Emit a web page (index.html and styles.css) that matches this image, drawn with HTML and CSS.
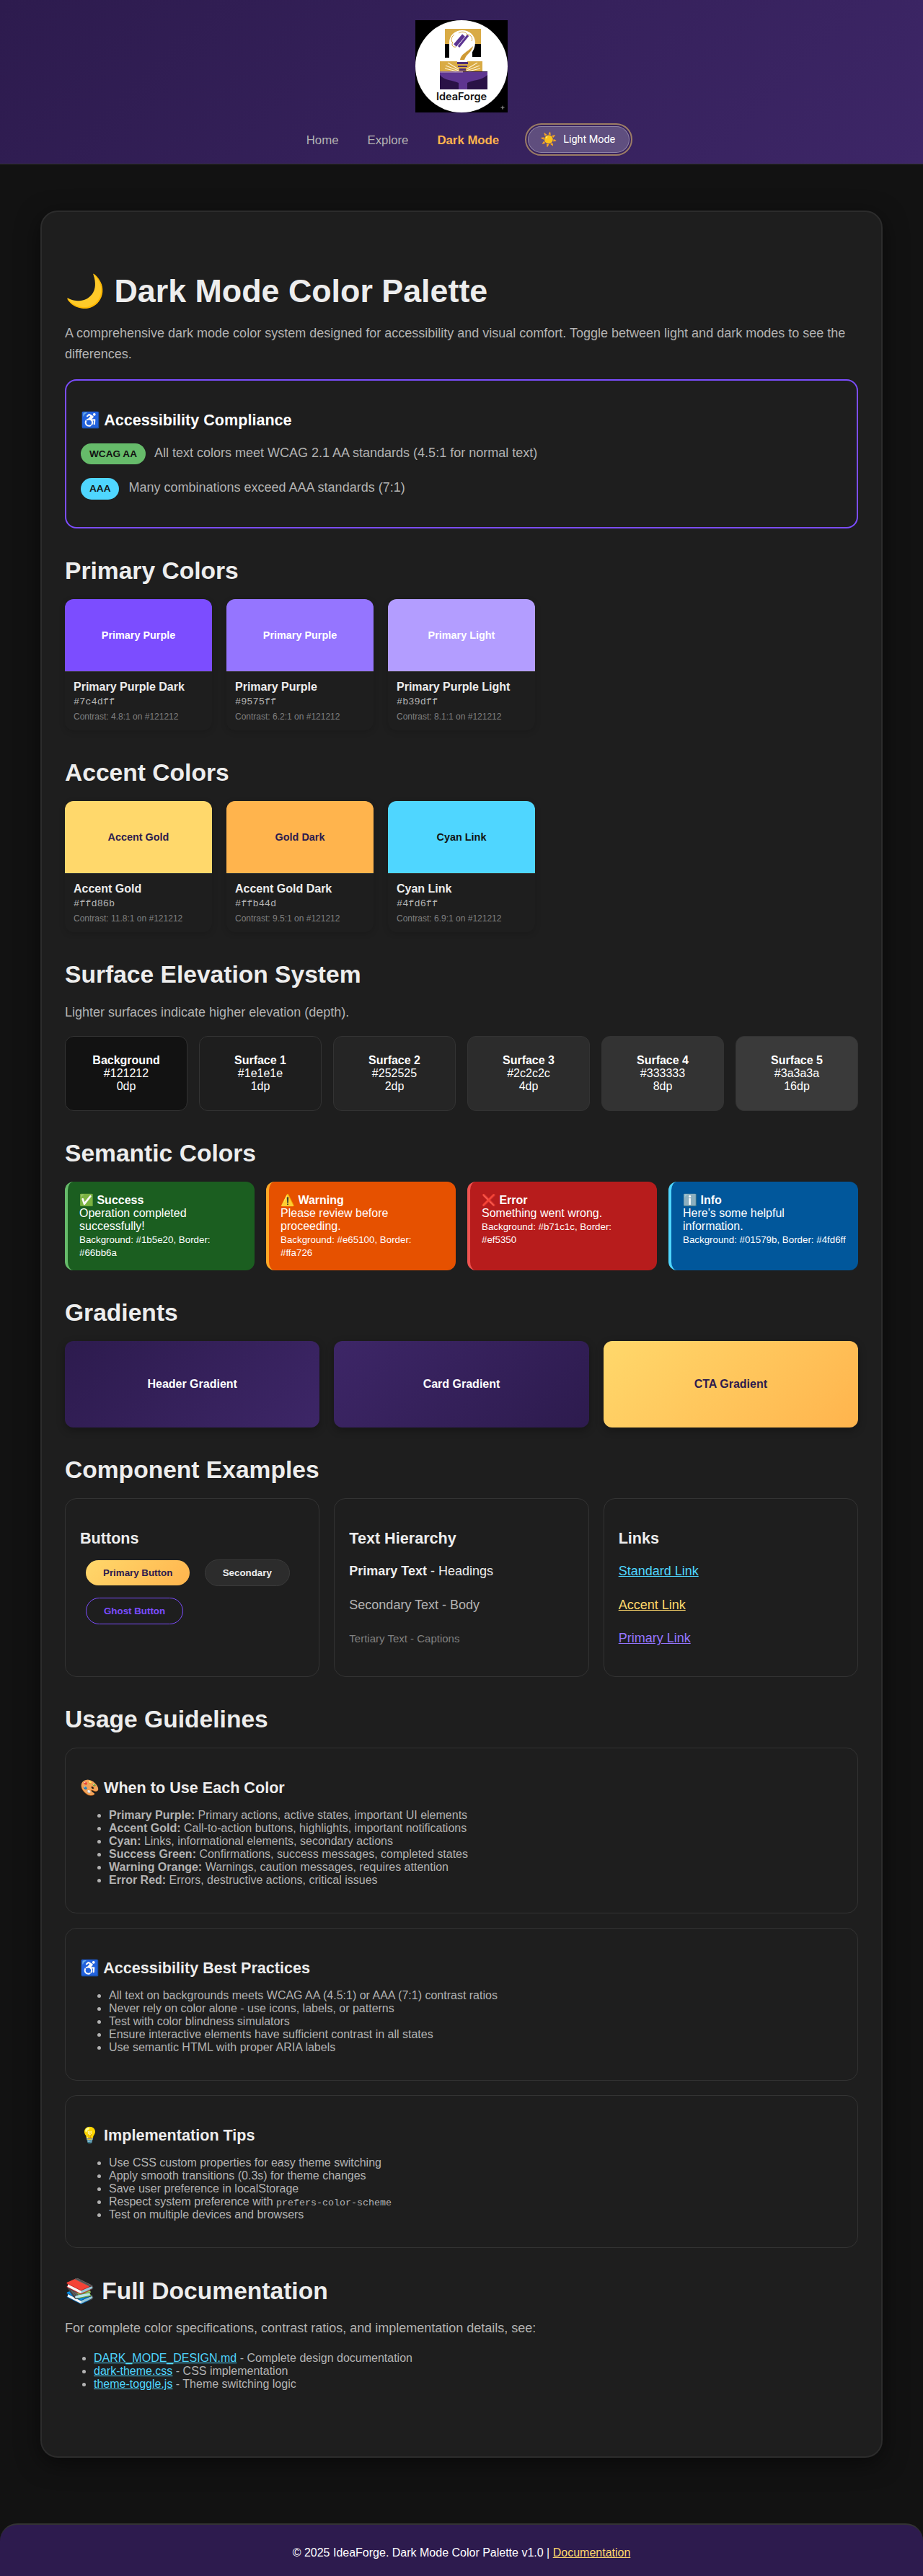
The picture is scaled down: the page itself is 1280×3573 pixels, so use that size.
FILE: index.html
```
<!DOCTYPE html>
<html lang="en">
<head>
<meta charset="utf-8">
<title>Dark Mode Color Palette - IdeaForge</title>
<link rel="stylesheet" href="styles.css">
</head>
<body>
<header class="site-header">
  <svg class="logo" viewBox="0 0 128 128" width="128" height="128" role="img" aria-label="IdeaForge logo">
    <rect width="128" height="128" fill="#000"/>
    <circle cx="64" cy="64" r="64" fill="#fff"/>
    <rect x="41" y="12" width="50" height="21" fill="#d9ab45"/>
    <rect x="41" y="33" width="6" height="19" fill="#000"/>
    <rect x="79" y="33" width="12" height="18" fill="#000"/>
    <path d="M59 58 C58 50 47 45 47 31 C47 21 55 14 65 14 C75 14 83 21 83 31 C83 44 73 49 72 58 Z" fill="#fff"/>
    <path d="M54 20 C49 24 49 29 52 31 C49 35 53 38 56 37 M60 18 C64 15 70 16 72 20 C78 20 80 26 78 29" fill="none" stroke="#d4a23c" stroke-width="1"/>
    <path d="M55 35 L67 21" stroke="#5b3390" stroke-width="5"/>
    <path d="M60 37 L73 21" stroke="#5b3390" stroke-width="3"/>
    <path d="M62 55 C63 47 71 45 80 36 C79 44 71 46 68 55 Z" fill="#cf9a35"/>
    <rect x="34" y="57" width="24" height="15" fill="#d9ab45"/>
    <rect x="72" y="57" width="21" height="15" fill="#d9ab45"/>
    <rect x="34" y="60" width="59" height="12" fill="#d9ab45"/>
    <path d="M58 58 H73 V61 H58 Z M59 63 H72 V65 H59 Z M61 67 H70 V70 H61 Z" fill="#4c2c78"/>
    <path d="M45 59 L60 68 M42 63 L60 70 M41 67 L62 72 M86 59 L71 68 M89 63 L71 70 M90 67 L69 72" stroke="#fff4d6" stroke-width="1.1"/>
    <rect x="34" y="71" width="66" height="25" fill="#2a1246"/>
    <path d="M34 72 H100 V76 C92 84 78 83 72 87 L72 96 H60 V87 C52 83 40 84 34 76 Z" fill="#5e3590"/>
    <rect x="34" y="71" width="32" height="2" fill="#8d6aa8"/>
    <text class="logo-word" x="64" y="111" text-anchor="middle">IdeaForge</text>
    <path d="M121 118 L122 120.500 L124.500 121 L122 122 L121 124.500 L120 122 L117.500 121 L120 120.500 Z" fill="#777"/>
  </svg>
  <nav class="nav">
    <a class="nav-link" href="#">Home</a>
    <a class="nav-link" href="#">Explore</a>
    <a class="nav-link nav-active" href="#">Dark Mode</a>
    <button class="theme-toggle" type="button"><span class="toggle-icon">☀️</span><span>Light Mode</span></button>
  </nav>
</header>

<main class="page-card">
  <section class="intro">
    <h1>🌙 Dark Mode Color Palette</h1>
    <p>A comprehensive dark mode color system designed for accessibility and visual comfort. Toggle between light and dark modes to see the differences.</p>
    <div class="compliance">
      <h3>♿ Accessibility Compliance</h3>
      <p><span class="badge badge-aa">WCAG AA</span> All text colors meet WCAG 2.1 AA standards (4.5:1 for normal text)</p>
      <p><span class="badge badge-aaa">AAA</span> Many combinations exceed AAA standards (7:1)</p>
    </div>
  </section>

  <section>
    <h2>Primary Colors</h2>
    <div class="swatch-grid">
      <article class="swatch">
        <div class="chip chip-purple-dark">Primary Purple</div>
        <div class="swatch-info"><div class="swatch-name">Primary Purple Dark</div><div class="swatch-hex">#7c4dff</div><div class="swatch-contrast">Contrast: 4.8:1 on #121212</div></div>
      </article>
      <article class="swatch">
        <div class="chip chip-purple">Primary Purple</div>
        <div class="swatch-info"><div class="swatch-name">Primary Purple</div><div class="swatch-hex">#9575ff</div><div class="swatch-contrast">Contrast: 6.2:1 on #121212</div></div>
      </article>
      <article class="swatch">
        <div class="chip chip-purple-light">Primary Light</div>
        <div class="swatch-info"><div class="swatch-name">Primary Purple Light</div><div class="swatch-hex">#b39dff</div><div class="swatch-contrast">Contrast: 8.1:1 on #121212</div></div>
      </article>
    </div>
  </section>

  <section>
    <h2>Accent Colors</h2>
    <div class="swatch-grid">
      <article class="swatch">
        <div class="chip chip-gold">Accent Gold</div>
        <div class="swatch-info"><div class="swatch-name">Accent Gold</div><div class="swatch-hex">#ffd86b</div><div class="swatch-contrast">Contrast: 11.8:1 on #121212</div></div>
      </article>
      <article class="swatch">
        <div class="chip chip-gold-dark">Gold Dark</div>
        <div class="swatch-info"><div class="swatch-name">Accent Gold Dark</div><div class="swatch-hex">#ffb44d</div><div class="swatch-contrast">Contrast: 9.5:1 on #121212</div></div>
      </article>
      <article class="swatch">
        <div class="chip chip-cyan">Cyan Link</div>
        <div class="swatch-info"><div class="swatch-name">Cyan Link</div><div class="swatch-hex">#4fd6ff</div><div class="swatch-contrast">Contrast: 6.9:1 on #121212</div></div>
      </article>
    </div>
  </section>

  <section>
    <h2>Surface Elevation System</h2>
    <p class="surface-note">Lighter surfaces indicate higher elevation (depth).</p>
    <div class="surface-grid">
      <div class="surface surface-0"><strong>Background</strong><br>#121212<br>0dp</div>
      <div class="surface surface-1"><strong>Surface 1</strong><br>#1e1e1e<br>1dp</div>
      <div class="surface surface-2"><strong>Surface 2</strong><br>#252525<br>2dp</div>
      <div class="surface surface-3"><strong>Surface 3</strong><br>#2c2c2c<br>4dp</div>
      <div class="surface surface-4"><strong>Surface 4</strong><br>#333333<br>8dp</div>
      <div class="surface surface-5"><strong>Surface 5</strong><br>#3a3a3a<br>16dp</div>
    </div>
  </section>

  <section>
    <h2>Semantic Colors</h2>
    <div class="semantic-grid">
      <div class="semantic semantic-success"><strong>✅ Success</strong><br>Operation completed successfully!<br><small>Background: #1b5e20, Border: #66bb6a</small></div>
      <div class="semantic semantic-warning"><strong>⚠️ Warning</strong><br>Please review before proceeding.<br><small>Background: #e65100, Border: #ffa726</small></div>
      <div class="semantic semantic-error"><strong>❌ Error</strong><br>Something went wrong.<br><small>Background: #b71c1c, Border: #ef5350</small></div>
      <div class="semantic semantic-info"><strong>ℹ️ Info</strong><br>Here's some helpful information.<br><small>Background: #01579b, Border: #4fd6ff</small></div>
    </div>
  </section>

  <section>
    <h2>Gradients</h2>
    <div class="three-grid">
      <div class="gradient gradient-header">Header Gradient</div>
      <div class="gradient gradient-card">Card Gradient</div>
      <div class="gradient gradient-cta">CTA Gradient</div>
    </div>
  </section>

  <section>
    <h2>Component Examples</h2>
    <div class="three-grid">
      <div class="panel">
        <h3>Buttons</h3>
        <button class="btn btn-primary" type="button">Primary Button</button>
        <button class="btn btn-secondary" type="button">Secondary</button>
        <button class="btn btn-ghost" type="button">Ghost Button</button>
      </div>
      <div class="panel">
        <h3>Text Hierarchy</h3>
        <p class="text-primary"><strong>Primary Text</strong> - Headings</p>
        <p>Secondary Text - Body</p>
        <p class="text-tertiary"><small>Tertiary Text - Captions</small></p>
      </div>
      <div class="panel">
        <h3>Links</h3>
        <p><a class="link-cyan" href="#">Standard Link</a></p>
        <p><a class="link-gold" href="#">Accent Link</a></p>
        <p><a class="link-purple" href="#">Primary Link</a></p>
      </div>
    </div>
  </section>

  <section>
    <h2>Usage Guidelines</h2>
    <div class="guide-stack">
      <div class="panel">
        <h3>🎨 When to Use Each Color</h3>
        <ul>
          <li><strong>Primary Purple:</strong> Primary actions, active states, important UI elements</li>
          <li><strong>Accent Gold:</strong> Call-to-action buttons, highlights, important notifications</li>
          <li><strong>Cyan:</strong> Links, informational elements, secondary actions</li>
          <li><strong>Success Green:</strong> Confirmations, success messages, completed states</li>
          <li><strong>Warning Orange:</strong> Warnings, caution messages, requires attention</li>
          <li><strong>Error Red:</strong> Errors, destructive actions, critical issues</li>
        </ul>
      </div>
      <div class="panel">
        <h3>♿ Accessibility Best Practices</h3>
        <ul>
          <li>All text on backgrounds meets WCAG AA (4.5:1) or AAA (7:1) contrast ratios</li>
          <li>Never rely on color alone - use icons, labels, or patterns</li>
          <li>Test with color blindness simulators</li>
          <li>Ensure interactive elements have sufficient contrast in all states</li>
          <li>Use semantic HTML with proper ARIA labels</li>
        </ul>
      </div>
      <div class="panel">
        <h3>💡 Implementation Tips</h3>
        <ul>
          <li>Use CSS custom properties for easy theme switching</li>
          <li>Apply smooth transitions (0.3s) for theme changes</li>
          <li>Save user preference in localStorage</li>
          <li>Respect system preference with <code>prefers-color-scheme</code></li>
          <li>Test on multiple devices and browsers</li>
        </ul>
      </div>
    </div>
  </section>

  <section class="docs">
    <h2>📚 Full Documentation</h2>
    <p>For complete color specifications, contrast ratios, and implementation details, see:</p>
    <ul>
      <li><a class="link-cyan" href="#">DARK_MODE_DESIGN.md</a> - Complete design documentation</li>
      <li><a class="link-cyan" href="#">dark-theme.css</a> - CSS implementation</li>
      <li><a class="link-cyan" href="#">theme-toggle.js</a> - Theme switching logic</li>
    </ul>
  </section>
</main>

<footer class="site-footer">© 2025 IdeaForge. Dark Mode Color Palette v1.0 | <a href="#">Documentation</a></footer>
</body>
</html>
```

FILE: styles.css
```
* { box-sizing: border-box; }

body {
  margin: 0;
  background: #121212;
  color: #b3b3b3;
  font-family: "Liberation Sans", Arial, sans-serif;
  font-size: 16px;
}

.site-header {
  display: flex;
  flex-direction: column;
  align-items: center;
  height: 228px;
  padding-top: 28px;
  background: linear-gradient(135deg, #2d1b4e, #3d2667);
  border-bottom: 1px solid #333;
}

.logo { display: block; margin-bottom: 19px; }

.logo-word {
  font-family: Inter, "Liberation Sans", sans-serif;
  font-size: 14.500px;
  font-weight: 600;
  fill: #111;
}

.nav {
  display: flex;
  align-items: center;
  gap: 40px;
  padding-left: 18px;
}

.nav-link { padding-top: 2px; color: #b3b3b3; text-decoration: none; font-size: 16.800px; }
.nav-active { color: #ffb44d; font-weight: 700; }

.theme-toggle {
  display: flex;
  align-items: center;
  gap: 8px;
  height: 37px;
  padding: 0 19px 0 16px;
  border: 1px solid rgba(255, 255, 255, 0.3);
  border-radius: 19px;
  outline: 2px solid rgba(255, 216, 107, 0.5);
  outline-offset: 2px;
  background: rgba(255, 255, 255, 0.2);
  color: #fff;
  font-family: Roboto, sans-serif;
  font-size: 14.400px;
}

.toggle-icon { font-size: 19px; }

.page-card {
  margin: 64px 56px 91px;
  padding: 32px 32px 51px;
  background: #1e1e1e;
  border: 2px solid #2c2c2c;
  border-radius: 24px;
  box-shadow: 0 8px 32px rgba(0, 0, 0, 0.5);
}

section { margin-bottom: 40px; }

h1, h2, h3 { color: #ededed; font-weight: 700; }

h1 { margin: 51px 0 18px; font-size: 44.800px; }
h2 { margin: 0 0 20px; font-size: 33.600px; }
h3 { margin: 22px 0 16px; font-size: 21.600px; }

p { margin: 18px 0; font-size: 18px; line-height: 1.6; }

.compliance {
  margin-top: 20px;
  padding: 20px;
  border: 2px solid #7c4dff;
  border-radius: 16px;
}

.compliance h3 { color: #fff; }

.badge {
  display: inline-block;
  margin-right: 8px;
  padding: 4px 12px;
  border-radius: 16px;
  color: #121212;
  font-size: 13.600px;
  font-weight: 700;
}

.badge-aa { background: #66bb6a; }
.badge-aaa { background: #4fd6ff; }

.swatch-grid {
  display: grid;
  grid-template-columns: repeat(auto-fill, minmax(200px, 1fr));
  gap: 20px;
}

.swatch {
  border-radius: 12px;
  overflow: hidden;
  background: #1e1e1e;
  box-shadow: 0 2px 8px rgba(0, 0, 0, 0.15);
}

.chip {
  display: flex;
  align-items: center;
  justify-content: center;
  height: 101px;
  border-bottom: 1px solid #333;
  font-size: 14.400px;
  font-weight: 700;
  color: #fff;
}

.chip-purple-dark { background: #7c4dff; }
.chip-purple { background: #9575ff; }
.chip-purple-light { background: #b39dff; }
.chip-gold { background: #ffd86b; color: #2d1b4e; }
.chip-gold-dark { background: #ffb44d; color: #2d1b4e; }
.chip-cyan { background: #4fd6ff; color: #121212; }

.swatch-info { padding: 12px; }
.swatch-name { margin-bottom: 4px; color: #ededed; font-weight: 700; }
.swatch-hex { margin-bottom: 6px; font-family: "Liberation Mono", monospace; font-size: 13.600px; color: #b3b3b3; }
.swatch-contrast { font-size: 12px; color: #808080; }

.surface-note { margin-top: -1px; }

.surface-grid {
  display: grid;
  grid-template-columns: repeat(6, 1fr);
  gap: 16px;
}

.surface {
  padding: 24px 8px;
  border: 1px solid #333;
  border-radius: 12px;
  color: #fff;
  text-align: center;
}

.surface-0 { background: #121212; }
.surface-1 { background: #1e1e1e; }
.surface-2 { background: #252525; }
.surface-3 { background: #2c2c2c; }
.surface-4 { background: #333; }
.surface-5 { background: #3a3a3a; }

.semantic-grid {
  display: grid;
  grid-template-columns: repeat(4, 1fr);
  gap: 16px;
}

.semantic {
  padding: 16px;
  border-left: 4px solid;
  border-radius: 12px;
  color: #fff;
}

.semantic-success { background: #1b5e20; border-color: #66bb6a; }
.semantic-warning { background: #e65100; border-color: #ffa726; }
.semantic-error { background: #b71c1c; border-color: #ef5350; }
.semantic-info { background: #01579b; border-color: #4fd6ff; }

.three-grid {
  display: grid;
  grid-template-columns: repeat(3, 1fr);
  gap: 20px;
}

.gradient {
  display: flex;
  align-items: center;
  justify-content: center;
  height: 120px;
  border-radius: 12px;
  font-weight: 700;
  color: #fff;
  box-shadow: 0 4px 12px rgba(0, 0, 0, 0.3);
}

.gradient-header { background: linear-gradient(135deg, #2d1b4e, #3d2667); }
.gradient-card { background: linear-gradient(135deg, #3d2667, #2d1b4e); }
.gradient-cta { background: linear-gradient(135deg, #ffd86b, #ffb44d); color: #2d1b4e; }

.panel {
  padding: 20px;
  border: 1px solid #333;
  border-radius: 16px;
}

.btn {
  margin: 0 8px 16px;
  padding: 10px 24px;
  border: 0;
  border-radius: 24px;
  font-family: "Liberation Sans", sans-serif;
  font-size: 13.333px;
  font-weight: 700;
}

.btn-primary { background: linear-gradient(135deg, #ffd86b, #ffb44d); color: #2d1b4e; }
.btn-secondary { background: #2c2c2c; border: 1px solid #3a3a3a; color: #ededed; }
.btn-ghost { background: transparent; border: 1px solid #7c4dff; color: #7c4dff; }

.text-primary { color: #ededed; }
.text-tertiary { color: #808080; }

.link-cyan { color: #4fd6ff; }
.link-gold { color: #ffd86b; }
.link-purple { color: #9575ff; }

.guide-stack {
  display: flex;
  flex-direction: column;
  gap: 20px;
}

ul { margin: 16px 0; padding-left: 40px; }

.docs h2 { margin-bottom: 18px; }

code {
  font-family: "Liberation Mono", monospace;
  font-size: 13.333px;
}

.site-footer {
  height: 73px;
  padding-top: 30px;
  border-top: 2px solid #333;
  border-radius: 24px 24px 0 0;
  background: #2d1b4e;
  color: #fff;
  text-align: center;
}

.site-footer a { color: #ffd86b; }
```
